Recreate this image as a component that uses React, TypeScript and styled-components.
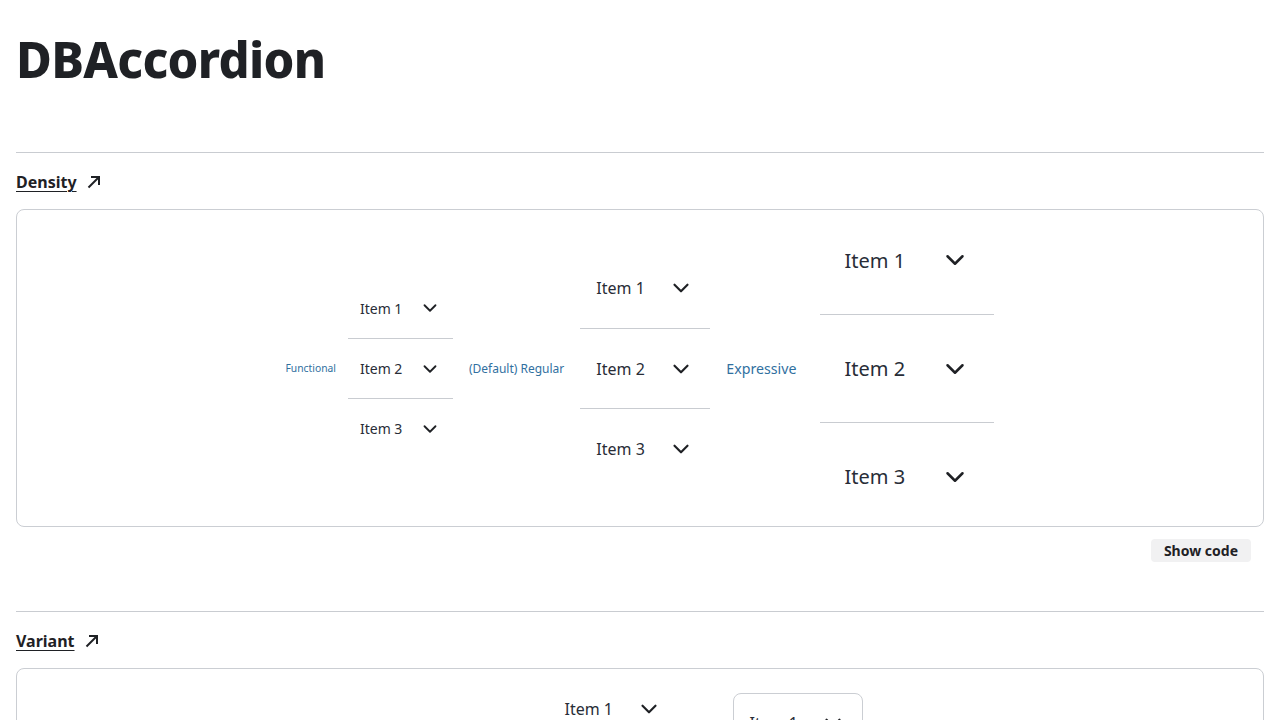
import React from "react";
import styled, { createGlobalStyle } from "styled-components";
import { ChevronDown } from "lucide-react";

const GlobalStyle = createGlobalStyle`
  * { box-sizing: border-box; }
  body {
    margin: 0;
    background: #fff;
    color: #282d37;
    font-family: "Noto Sans", "Open Sans", sans-serif;
  }
`;

type Density = "functional" | "regular" | "expressive";

const DENSITY: Record<
  Density,
  { height: number; pad: number; font: number; icon: number; width: number }
> = {
  functional: { height: 60, pad: 12, font: 14, icon: 22, width: 105 },
  regular: { height: 80, pad: 16, font: 16, icon: 26, width: 130 },
  expressive: { height: 108, pad: 24, font: 20, icon: 30, width: 174 },
};

const Page = styled.main`
  padding: 0 16px;
`;

const Title = styled.h1`
  margin: 29px 0 63px;
  font-size: 49px;
  line-height: 60px;
  font-weight: 800;
  color: #1f2125;
  letter-spacing: -0.7px;
`;

const Section = styled.section`
  border-top: 1px solid #c9ccd1;
  padding-top: 17px;
  margin-bottom: 49px;
`;

const SectionLink = styled.a`
  display: inline-flex;
  align-items: center;
  gap: 10px;
  height: 24px;
  font-size: 16px;
  line-height: 24px;
  font-weight: 700;
  color: #1f2125;
  text-decoration: none;

  span {
    text-decoration: underline;
    text-underline-offset: 3px;
    text-decoration-thickness: 1px;
  }
`;

const Card = styled.div<{ $height?: number }>`
  margin-top: 15px;
  border: 1px solid #cbced3;
  border-radius: 8px;
  height: ${(p) => (p.$height ? `${p.$height}px` : "auto")};
  display: flex;
  align-items: center;
  justify-content: center;
  gap: 16px;
`;

const Group = styled.div<{ $gap: number }>`
  display: flex;
  align-items: center;
  gap: ${(p) => p.$gap}px;
`;

const Label = styled.span<{ $size: number }>`
  font-size: ${(p) => p.$size}px;
  color: #31709f;
  white-space: nowrap;
`;

const AccordionList = styled.div<{ $width: number; $card?: boolean }>`
  width: ${(p) => p.$width}px;
  display: flex;
  flex-direction: column;
  gap: ${(p) => (p.$card ? "6px" : "0")};
`;

const Item = styled.div<{ $d: Density; $card?: boolean }>`
  height: ${(p) => (p.$card ? 60 : DENSITY[p.$d].height)}px;
  padding: 0 ${(p) => DENSITY[p.$d].pad}px;
  display: flex;
  align-items: center;
  justify-content: space-between;
  font-size: ${(p) => DENSITY[p.$d].font}px;
  color: #282d37;
  border: ${(p) => (p.$card ? "1px solid #cbced3" : "none")};
  border-radius: ${(p) => (p.$card ? "8px" : "0")};

  & + & {
    border-top: 1px solid #c9ccd1;
  }

  svg {
    flex: none;
  }
`;

const Footer = styled.div`
  display: flex;
  justify-content: flex-end;
  margin-top: 12px;
  padding-right: 13px;
`;

const ShowCode = styled.button`
  height: 23px;
  padding: 0 13px;
  border: none;
  border-radius: 4px;
  background: #f1f1f2;
  font-family: "Noto Sans", sans-serif;
  font-size: 14px;
  font-weight: 700;
  color: #1f2125;
`;

const Accordion: React.FC<{ density: Density; card?: boolean }> = ({ density, card }) => {
  const d = DENSITY[density];
  return (
    <AccordionList $width={d.width} $card={card}>
      {["Item 1", "Item 2", "Item 3"].map((t) => (
        <Item key={t} $d={density} $card={card}>
          {t}
          <ChevronDown size={d.icon} strokeWidth={2} color="#1f2125" />
        </Item>
      ))}
    </AccordionList>
  );
};

const LinkArrow = () => (
  <svg width="14" height="14" viewBox="0 0 14 14" fill="none" stroke="#1f2125" strokeWidth="2">
    <path d="M1.5 12.5 12 2" />
    <path d="M4 2h8v8" />
  </svg>
);

const Heading: React.FC<{ text: string }> = ({ text }) => (
  <SectionLink href="#">
    <span>{text}</span>
    <LinkArrow />
  </SectionLink>
);

export default function App() {
  return (
    <>
      <GlobalStyle />
      <Page>
        <Title>DBAccordion</Title>

        <Section>
          <Heading text="Density" />
          <Card $height={318}>
            <Group $gap={12}>
              <Label $size={10.3}>Functional</Label>
              <Accordion density="functional" />
            </Group>
            <Group $gap={16}>
              <Label $size={12}>(Default) Regular</Label>
              <Accordion density="regular" />
            </Group>
            <Group $gap={24}>
              <Label $size={14.2}>Expressive</Label>
              <Accordion density="expressive" />
            </Group>
          </Card>
          <Footer>
            <ShowCode>Show code</ShowCode>
          </Footer>
        </Section>

        <Section>
          <Heading text="Variant" />
          <Card>
            <Group $gap={16}>
              <Label $size={15.05}>(Default) Divider</Label>
              <Accordion density="regular" />
            </Group>
            <Group $gap={16}>
              <Label $size={10}>Card</Label>
              <Accordion density="regular" card />
            </Group>
          </Card>
          <Footer>
            <ShowCode>Show code</ShowCode>
          </Footer>
        </Section>
      </Page>
    </>
  );
}
